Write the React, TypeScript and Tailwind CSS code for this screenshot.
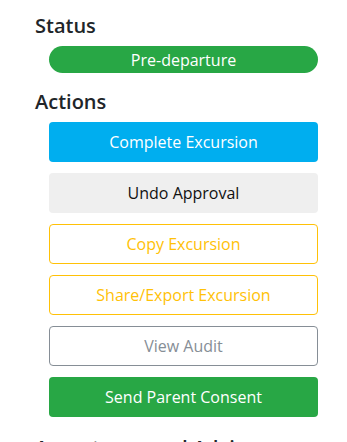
import React from "react";

const btnBase =
  "flex h-[40px] w-full items-center justify-center rounded-[4px] text-[16px] leading-none";

export default function App() {
  return (
    <div
      className="min-h-[442px] w-[347px] bg-white pl-[35px] pt-[14px] text-[#212529]"
      style={{ fontFamily: '"Open Sans", "Noto Sans", sans-serif' }}
    >
      <h2 className="text-[20px] font-semibold leading-[24px]">Status</h2>
      <div className="ml-[14px] mt-[8px] w-[269px]">
        <div className="flex h-[27px] items-center justify-center rounded-full bg-[#28a745] text-[16px] leading-none text-white">
          Pre-departure
        </div>
      </div>
      <h2 className="mt-[17px] text-[20px] font-semibold leading-[24px]">Actions</h2>
      <div className="ml-[14px] mt-[8px] flex w-[269px] flex-col gap-[11px]">
        <button className={`${btnBase} bg-[#00aeef] text-white`}>Complete Excursion</button>
        <button className={`${btnBase} bg-[#efefef] text-[#111111]`}>Undo Approval</button>
        <button className={`${btnBase} border border-[#ffc107] bg-white text-[#ffc107]`}>
          Copy Excursion
        </button>
        <button className={`${btnBase} border border-[#ffc107] bg-white text-[#ffc107]`}>
          Share/Export Excursion
        </button>
        <button className={`${btnBase} border border-[#868e96] bg-white text-[#868e96]`}>
          View Audit
        </button>
        <button className={`${btnBase} bg-[#28a745] text-white`}>Send Parent Consent</button>
      </div>
      <h2 className="mt-[19px] text-[20px] font-semibold leading-[24px]">Acceptance and Advice</h2>
    </div>
  );
}
